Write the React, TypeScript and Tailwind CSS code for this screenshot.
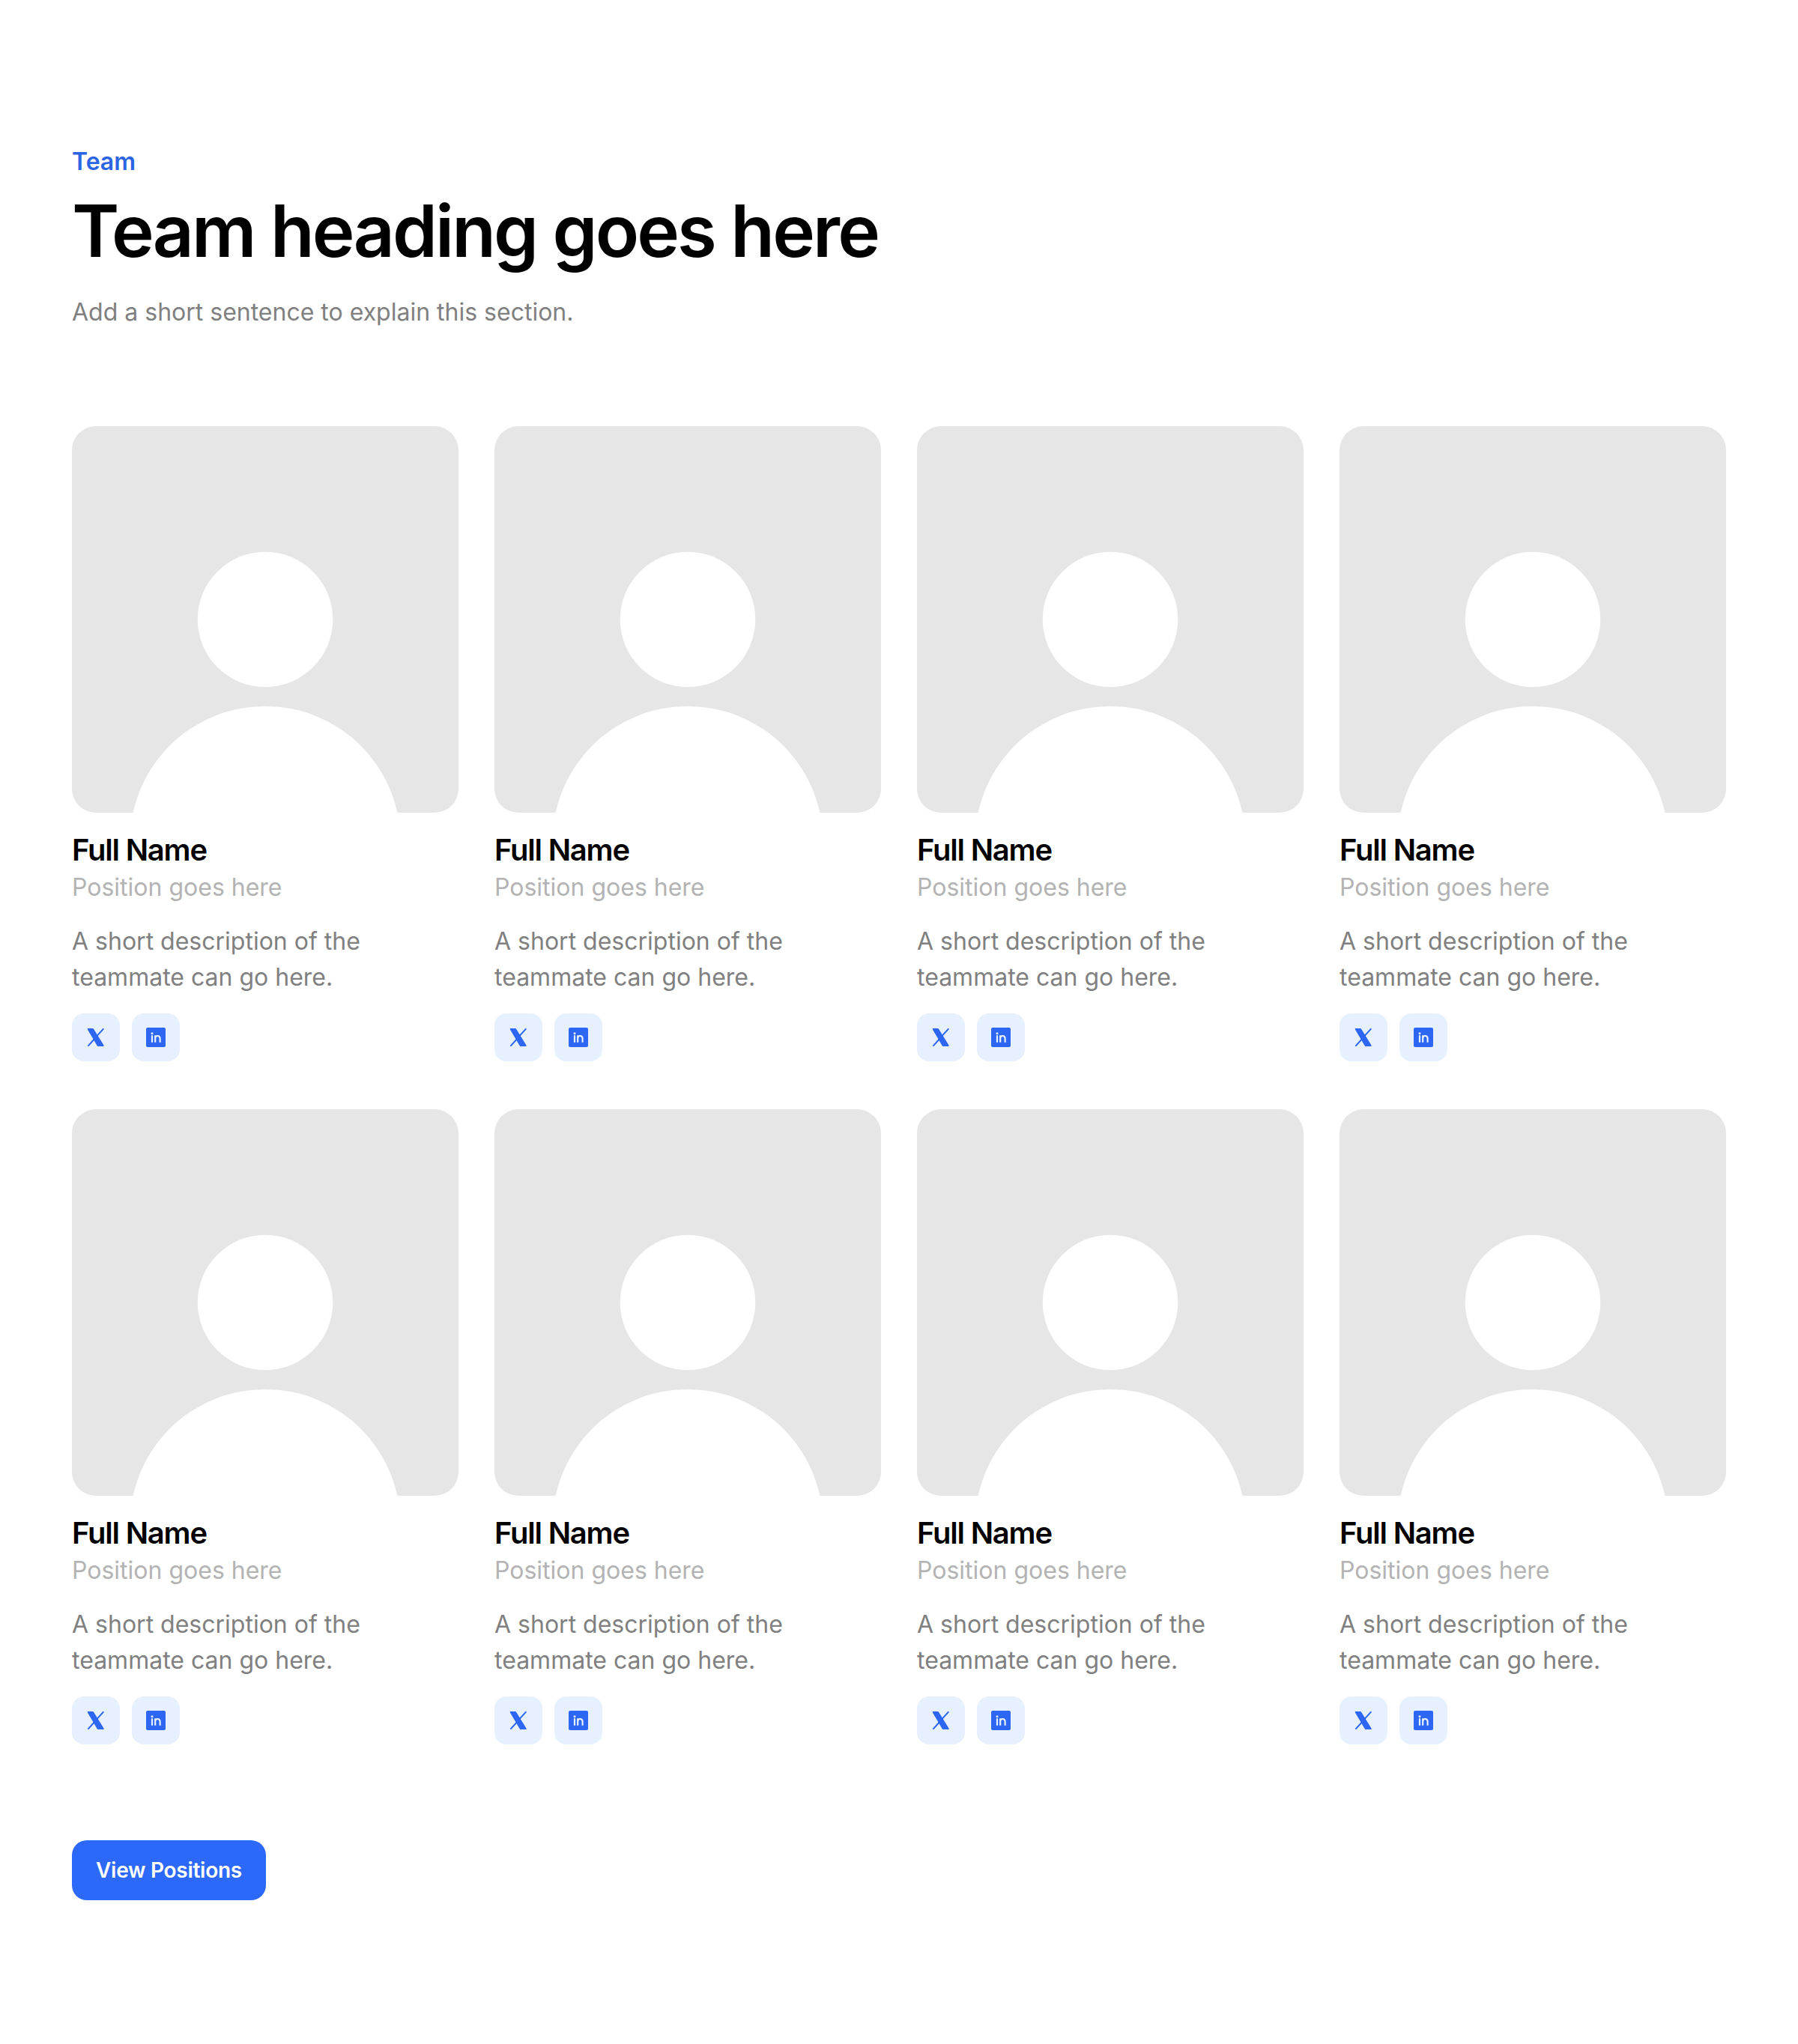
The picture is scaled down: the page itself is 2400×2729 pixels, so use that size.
import type { ReactNode } from "react";

type Member = {
  id: number;
  name: string;
  position: string;
  description: string;
};

const members: Member[] = Array.from({ length: 8 }, (_, index) => ({
  id: index + 1,
  name: "Full Name",
  position: "Position goes here",
  description: "A short description of the teammate can go here.",
}));

export default function App() {
  return (
    <section className="flex min-h-screen flex-col items-start bg-white px-24 py-48 font-['Inter',sans-serif]">
      <header>
        <p className="text-[32px] leading-[48px] font-semibold text-[#2b65e4]">Team</p>
        <h2 className="mt-4 text-8xl leading-[105px] font-semibold tracking-[-0.03em] text-black">
          Team heading goes here
        </h2>
        <p className="mt-8 text-[32px] leading-[48px] text-[#808080]">
          Add a short sentence to explain this section.
        </p>
      </header>

      <div className="mt-32 grid w-full grid-cols-4 gap-x-12 gap-y-16">
        {members.map((member) => (
          <MemberCard key={member.id} member={member} />
        ))}
      </div>

      <button
        type="button"
        className="mt-32 h-20 rounded-[20px] bg-[#2c68f9] px-8 text-[28px] leading-[42px] font-semibold tracking-[-0.01em] text-white"
      >
        View Positions
      </button>
    </section>
  );
}

function MemberCard({ member }: { member: Member }) {
  return (
    <article>
      <Avatar />
      <h3 className="mt-6 text-[40px] leading-[52px] font-semibold tracking-[-0.03em] text-black">
        {member.name}
      </h3>
      <p className="text-[32px] leading-[48px] text-[#b3b3b3]">{member.position}</p>
      <p className="mt-6 max-w-[440px] text-[32px] leading-[48px] text-[#808080]">
        {member.description}
      </p>
      <div className="mt-6 flex gap-4">
        <SocialLink label="X">
          <XIcon />
        </SocialLink>
        <SocialLink label="LinkedIn">
          <LinkedInIcon />
        </SocialLink>
      </div>
    </article>
  );
}

function Avatar() {
  return (
    <svg viewBox="0 0 516 516" className="block aspect-square w-full rounded-[32px] bg-[#e6e6e6]">
      <circle cx="258" cy="258" r="90.3" fill="#fff" />
      <circle cx="258" cy="554.5" r="180.6" fill="#fff" />
    </svg>
  );
}

function SocialLink({ label, children }: { label: string; children: ReactNode }) {
  return (
    <a
      href="#"
      aria-label={label}
      className="flex size-16 items-center justify-center rounded-2xl bg-[#e6f0ff] text-[#2c66f2]"
    >
      {children}
    </a>
  );
}

function XIcon() {
  return (
    <svg viewBox="0 0 32 32" className="size-8" fill="currentColor">
      <path d="M5.6 4h6.2q.8 0 1.2.7l13.5 21.9q.7 1.4-.8 1.4h-6.8q-.8 0-1.2-.7L4.9 5.4Q4.2 4 5.6 4Z" />
      <path
        d="m25.8 4.9-8.4 9.2M14.2 18l-8.3 9.1"
        fill="none"
        stroke="currentColor"
        strokeWidth="2"
        strokeLinecap="round"
      />
    </svg>
  );
}

function LinkedInIcon() {
  return (
    <svg viewBox="0 0 32 32" className="size-8">
      <rect x="3" y="3" width="26" height="26" rx="2" fill="currentColor" />
      <circle cx="11" cy="10.7" r="1.5" fill="#e6f0ff" />
      <path
        d="M11 13.2v9.5M15.2 13.2v9.5M15.2 17.8c0-2.3 1.2-3.8 3.2-3.8s3.2 1.3 3.2 3.6v5.1"
        fill="none"
        stroke="#e6f0ff"
        strokeWidth="2.2"
      />
    </svg>
  );
}
